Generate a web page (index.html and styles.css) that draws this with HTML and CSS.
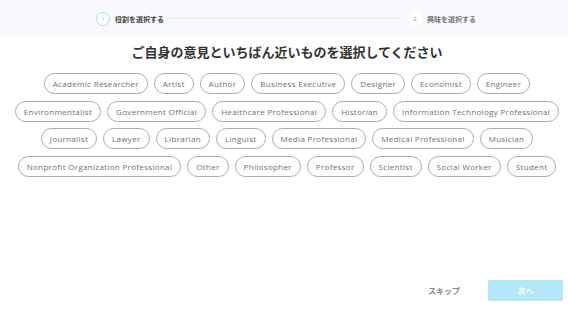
FILE: index.html
```html
<!DOCTYPE html>
<html lang="ja">
<head>
<meta charset="utf-8">
<link rel="stylesheet" href="styles.css">
</head>
<body>
<div class="page">
  <header class="steps">
    <div class="step active"><span class="num">1</span><span class="label">役割を選択する</span></div>
    <div class="line"></div>
    <div class="step"><span class="num">2</span><span class="label">興味を選択する</span></div>
  </header>
  <main class="main">
    <h1 class="title">ご自身の意見といちばん近いものを選択してください</h1>
    <div class="chips">
      <div class="row">
        <span class="chip">Academic Researcher</span>
        <span class="chip">Artist</span>
        <span class="chip">Author</span>
        <span class="chip">Business Executive</span>
        <span class="chip">Designer</span>
        <span class="chip">Economist</span>
        <span class="chip">Engineer</span>
      </div>
      <div class="row">
        <span class="chip">Environmentalist</span>
        <span class="chip">Government Official</span>
        <span class="chip">Healthcare Professional</span>
        <span class="chip">Historian</span>
        <span class="chip">Information Technology Professional</span>
      </div>
      <div class="row">
        <span class="chip">Journalist</span>
        <span class="chip">Lawyer</span>
        <span class="chip">Librarian</span>
        <span class="chip">Linguist</span>
        <span class="chip">Media Professional</span>
        <span class="chip">Medical Professional</span>
        <span class="chip">Musician</span>
      </div>
      <div class="row">
        <span class="chip">Nonprofit Organization Professional</span>
        <span class="chip">Other</span>
        <span class="chip">Philosopher</span>
        <span class="chip">Professor</span>
        <span class="chip">Scientist</span>
        <span class="chip">Social Worker</span>
        <span class="chip">Student</span>
      </div>
    </div>
  </main>
  <footer class="actions">
    <button class="skip">スキップ</button>
    <button class="next">次へ</button>
  </footer>
</div>
</body>
</html>
```
FILE: styles.css
```css
* { box-sizing: border-box; }
html, body { margin: 0; padding: 0; background: #ffffff; }
body {
  font-family: "Open Sans", "Noto Sans CJK JP", sans-serif;
  width: 568px;
  height: 310px;
  overflow: hidden;
}
.page { display: flex; flex-direction: column; height: 310px; }
.steps {
  height: 37px;
  background: #f8f9fc;
  display: flex;
  align-items: center;
  padding: 0 92px 0 96px;
  flex-shrink: 0;
}
.step { display: flex; align-items: center; gap: 5px; }
.num {
  width: 14px; height: 14px;
  border-radius: 50%;
  background: #fff;
  display: flex; align-items: center; justify-content: center;
  font-size: 6px;
  color: #888;
}
.step.active .num { border: 1px solid #a8dcef; color: #8fcde6; }
.label {
  font-family: "Noto Sans CJK JP", sans-serif;
  font-size: 7px;
  font-weight: 700;
  color: #555;
}
.step:not(.active) .label { color: #777; }
.step.active .label { color: #444; }
.line { flex: 1; height: 1px; background: #e9ebf0; margin: 0 8px 0 6px; }
.main { display: flex; flex-direction: column; align-items: center; }
.title {
  margin: 6px 0 0;
  font-family: "Noto Sans CJK JP", sans-serif;
  font-size: 13px;
  font-weight: 700;
  color: #333;
  line-height: 18px;
  padding-left: 6px;
}
.chips { margin-top: 12px; display: flex; flex-direction: column; gap: 6.5px; padding-left: 6px; }
.row { display: flex; justify-content: center; gap: 6px; }
.chip {
  height: 21px;
  line-height: 19px;
  padding: 0 8px;
  border: 1px solid #a9abb3;
  border-radius: 11px;
  font-size: 8px;
  color: #6b6f7b;
  white-space: nowrap;
  letter-spacing: 0.32px;
}
.actions {
  margin-top: auto;
  display: flex;
  justify-content: flex-end;
  align-items: center;
  gap: 28px;
  padding: 0 5px 9px 0;
}
button { font-family: "Noto Sans CJK JP", sans-serif; border: none; cursor: pointer; }
.skip { background: none; font-size: 8px; font-weight: 700; color: #888; padding: 0; }
.next {
  width: 75px; height: 21px;
  background: #b3e6f6;
  color: #fff;
  border-radius: 2px;
  font-size: 8px;
  font-weight: 700;
}
```
